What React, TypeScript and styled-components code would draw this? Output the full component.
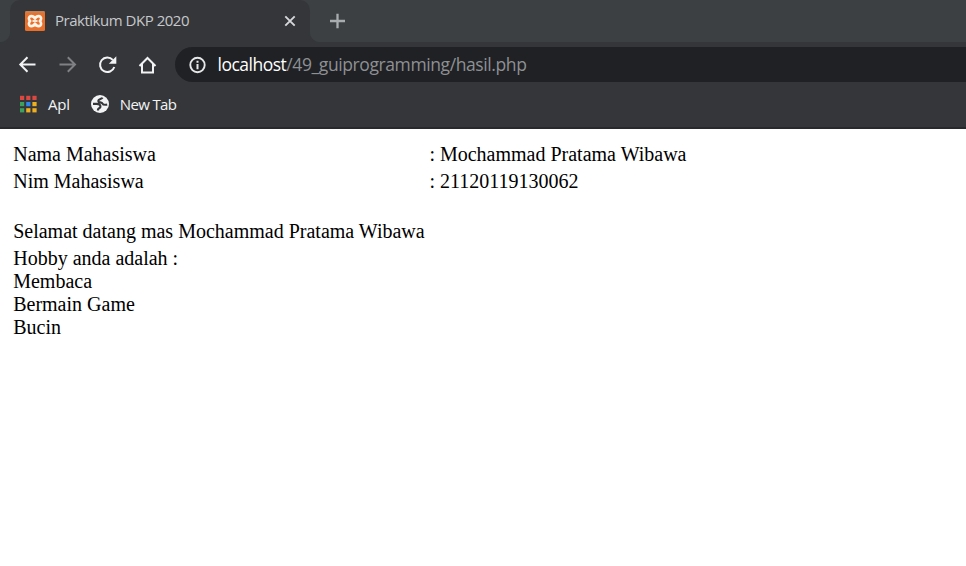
import React from "react";
import styled, { createGlobalStyle } from "styled-components";

const GlobalStyle = createGlobalStyle`
  * { box-sizing: border-box; }
  body { margin: 0; background: #fff; overflow: hidden; }
`;

const Browser = styled.div`
  display: flex;
  flex-direction: column;
  height: 100vh;
  font-family: "Open Sans", "Noto Sans", sans-serif;
`;

const TabStrip = styled.header`
  display: flex;
  height: 42px;
  padding-left: 10px;
  background: #3c4043;
`;

const Tab = styled.div`
  position: relative;
  display: flex;
  align-items: center;
  width: 300px;
  height: 42px;
  padding: 0 13px 0 15px;
  border-radius: 10px 10px 0 0;
  background: #35363a;
  color: #c6c8cb;

  &::before,
  &::after {
    content: "";
    position: absolute;
    bottom: 0;
    width: 10px;
    height: 10px;
  }
  &::before {
    right: 100%;
    background: radial-gradient(circle at 0 0, transparent 9.5px, #35363a 10.5px);
  }
  &::after {
    left: 100%;
    background: radial-gradient(circle at 100% 0, transparent 9.5px, #35363a 10.5px);
  }
`;

const Label = styled.span<{ $size: number; $spacing: number }>`
  font-size: ${(p) => p.$size}px;
  line-height: 22px;
  letter-spacing: ${(p) => p.$spacing}px;
  white-space: nowrap;
`;

const TabTitle = styled(Label)`
  flex: 1;
  margin-left: 10px;
  padding-bottom: 2px;
`;

const NewTabButton = styled.div`
  display: flex;
  align-items: center;
  margin-left: 19px;
`;

const Toolbar = styled.nav`
  display: flex;
  align-items: center;
  height: 45px;
  padding-left: 17px;
  background: #35363a;
`;

const NavButtons = styled.div`
  display: flex;
  gap: 20px;
  margin-right: 18px;
`;

const AddressBar = styled.div`
  display: flex;
  flex: 1;
  align-items: center;
  height: 35px;
  padding-left: 13px;
  border-radius: 18px 0 0 18px;
  background: #202124;
`;

const Address = styled(Label)`
  margin-left: 11.5px;
  padding-bottom: 1px;
  color: #8e9094;
`;

const Host = styled.span<{ $spacing: number }>`
  color: #fff;
  letter-spacing: ${(p) => p.$spacing}px;
`;

const Bookmarks = styled.nav`
  display: flex;
  align-items: center;
  gap: 20px;
  height: 42px;
  padding: 0 0 6px 18px;
  border-bottom: 2px solid #28292c;
  background: #35363a;
  color: #f1f3f4;
`;

const Bookmark = styled.div`
  display: flex;
  align-items: center;
  gap: 10px;
`;

const Page = styled.main`
  padding: 12.500px 0 0 13.200px;
  background: #fff;
  color: #000;
  font-family: "Liberation Serif", "Times New Roman", serif;
  font-size: 20px;
  line-height: 23px;
`;

const Row = styled.div`
  display: grid;
  grid-template-columns: 416.200px 1fr;
  height: 27px;
  padding-top: 1px;
`;

const Greeting = styled.div`
  height: 27px;
  margin-top: 24px;
`;

const Line = styled.div`
  height: 23px;
`;

const XamppIcon = () => (
  <svg width="20" height="20" viewBox="0 0 20 20">
    <rect width="20" height="20" rx="1.500" fill="#e8702a" />
    <path d="M0.500 1h19" stroke="#b98763" strokeWidth="1.400" />
    <path
      d="M10 7.600C8.400 4.300 3.900 4.300 3.900 7.500 3.900 9 5.200 10 5.200 10S3.900 11 3.900 12.700C3.900 15.900 8.400 15.900 10 12.600 11.600 15.900 16.100 15.900 16.100 12.700 16.100 11 14.800 10 14.800 10S16.100 9 16.100 7.500C16.100 4.300 11.600 4.300 10 7.600Z"
      fill="none"
      stroke="#fff4e9"
      strokeWidth="2.600"
      strokeLinejoin="round"
    />
    <path d="M7.500 10h5" stroke="#fff4e9" strokeWidth="1.800" />
  </svg>
);

const CloseIcon = () => (
  <svg width="14" height="14" viewBox="0 0 14 14">
    <path d="M2.300 2.300l9.400 9.400M11.700 2.300l-9.400 9.400" stroke="#d5d7da" strokeWidth="1.900" />
  </svg>
);

const PlusIcon = () => (
  <svg width="16" height="16" viewBox="0 0 16 16">
    <path d="M8.500 .700v14.600M1 8h15" stroke="#a9acaf" strokeWidth="2.300" />
  </svg>
);

const Arrow = ({ forward = false }: { forward?: boolean }) => (
  <svg width="20" height="20" viewBox="0 0 20 20">
    <path
      d={forward ? "M2.500 9.500h15M10.800 2.300l7.200 7.200-7.200 7.200" : "M18.500 9.500H3M10.500 2.300L3.300 9.500l7.200 7.200"}
      fill="none"
      stroke={forward ? "#7f8184" : "#f1f3f4"}
      strokeWidth="2"
    />
  </svg>
);

const ReloadIcon = () => (
  <svg width="20" height="20" viewBox="0 0 20 20">
    <path d="M17.300 12A7.300 7.300 0 1 1 15.800 4.900" fill="none" stroke="#f1f3f4" strokeWidth="2" />
    <path d="M19.300 1.300V8.800h-7.500z" fill="#f1f3f4" />
  </svg>
);

const HomeIcon = () => (
  <svg width="20" height="20" viewBox="0 0 20 20">
    <path d="M2.500 11L10.500 3l8 8M5 9v8.500h11V9" fill="none" stroke="#f1f3f4" strokeWidth="2" />
  </svg>
);

const InfoIcon = () => (
  <svg width="18" height="18" viewBox="0 0 18 18">
    <circle cx="9.500" cy="9" r="7.200" fill="none" stroke="#e5e7e9" strokeWidth="1.900" />
    <path d="M9.500 4.700v2M9.500 8v5.200" stroke="#e5e7e9" strokeWidth="2" />
  </svg>
);

const appColors = [
  ["#dc4840", "#dc4840", "#dc4840"],
  ["#3da05d", "#2e86ec", "#eeb01f"],
  ["#3da05d", "#eeb01f", "#eeb01f"],
];

const AppsIcon = () => (
  <svg width="20" height="20" viewBox="0 0 20 20">
    {appColors.flatMap((row, y) =>
      row.map((color, x) => (
        <rect key={`${x}-${y}`} x={2 + x * 6.200} y={1.800 + y * 6.200} width="4.200" height="4.200" fill={color} />
      )),
    )}
  </svg>
);

const GlobeIcon = () => (
  <svg width="20" height="20" viewBox="0 0 20 20">
    <circle cx="10" cy="10" r="9" fill="#f1f3f4" />
    <path
      d="M12.500 3.600C11.800 5.300 8.300 4.700 8.300 6.900 8.300 9 11.700 7.700 12.500 9.600 13.200 11.200 14.600 11 17.200 10.600M3 9.800H6.800C9.200 9.800 10.600 11 10.400 12.800 10.200 14.600 8.200 14 8 15.600V16.600"
      fill="none"
      stroke="#35363a"
      strokeWidth="2.200"
    />
  </svg>
);

export default function App() {
  return (
    <Browser>
      <GlobalStyle />
      <TabStrip>
        <Tab>
          <XamppIcon />
          <TabTitle $size={15} $spacing={-0.48}>Praktikum DKP 2020</TabTitle>
          <CloseIcon />
        </Tab>
        <NewTabButton><PlusIcon /></NewTabButton>
      </TabStrip>
      <Toolbar>
        <NavButtons>
          <Arrow />
          <Arrow forward />
          <ReloadIcon />
          <HomeIcon />
        </NavButtons>
        <AddressBar>
          <InfoIcon />
          <Address $size={17.5} $spacing={-0.4}>
            <Host $spacing={-0.5}>localhost</Host>/49_guiprogramming/hasil.php
          </Address>
        </AddressBar>
      </Toolbar>
      <Bookmarks>
        <Bookmark>
          <AppsIcon />
          <Label $size={15} $spacing={-0.2}>Apl</Label>
        </Bookmark>
        <Bookmark>
          <GlobeIcon />
          <Label $size={15} $spacing={-0.65}>New Tab</Label>
        </Bookmark>
      </Bookmarks>
      <Page>
        <Row>
          <span>Nama Mahasiswa</span>
          <span>: Mochammad Pratama Wibawa</span>
        </Row>
        <Row>
          <span>Nim Mahasiswa</span>
          <span>: 21120119130062</span>
        </Row>
        <Greeting>Selamat datang mas Mochammad Pratama Wibawa</Greeting>
        <Line>Hobby anda adalah :</Line>
        <Line>Membaca</Line>
        <Line>Bermain Game</Line>
        <Line>Bucin</Line>
      </Page>
    </Browser>
  );
}
